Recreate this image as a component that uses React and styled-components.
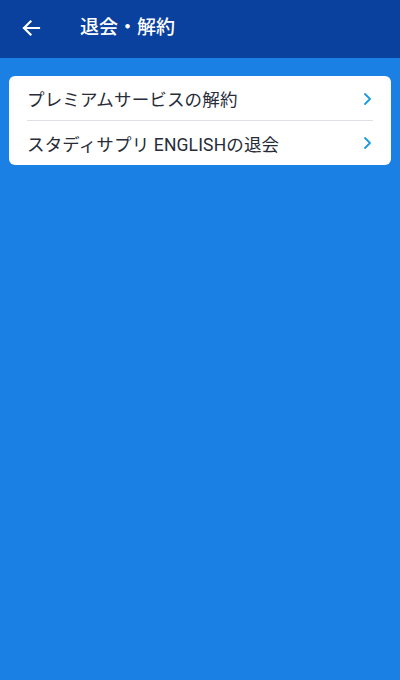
import React from "react";
import styled, { createGlobalStyle } from "styled-components";

const Global = createGlobalStyle`
  html, body { margin: 0; padding: 0; }
  body {
    background: #1a80e3;
    font-family: Roboto, "Noto Sans CJK JP", sans-serif;
  }
`;

const Page = styled.div`
  width: 400px;
  height: 680px;
  background: #1a80e3;
  display: flex;
  flex-direction: column;
`;

const Header = styled.header`
  height: 58px;
  box-sizing: border-box;
  background: #0a409e;
  display: flex;
  align-items: center;
  padding: 0 0 3px 21px;
  gap: 39px;
  color: #fff;
  flex-shrink: 0;
`;

const BackButton = styled.button`
  background: none;
  border: none;
  padding: 0;
  width: 20px;
  height: 20px;
  display: flex;
  align-items: center;
  justify-content: center;
  color: #fff;
`;

const Title = styled.h1`
  margin: 0;
  font-size: 19px;
  line-height: 1;
  font-weight: 500;
  font-family: Roboto, "Noto Sans CJK JP", sans-serif;
`;

const Content = styled.main`
  padding: 18px 9px;
`;

const Card = styled.ul`
  list-style: none;
  margin: 0;
  background: #fff;
  border-radius: 6px;
  padding: 0 18px 0 18px;
`;

const Row = styled.li`
  height: ${(p) => (p.$first ? "44px" : "45px")};
  display: flex;
  align-items: center;
  justify-content: space-between;
  border-top: ${(p) => (p.$first ? "none" : "1px solid #dde1e6")};
  box-sizing: border-box;
  font-size: 17.5px;
  letter-spacing: 0.15px;
  color: #272c38;
  padding-top: ${(p) => (p.$first ? "1px" : "0")};
`;

const Chevron = () => (
  <svg width="12" height="14" viewBox="0 0 12 14" fill="none">
    <path d="M4 2 L9 7 L4 12" stroke="#1a9ae2" strokeWidth="1.8" strokeLinecap="round" strokeLinejoin="round" />
  </svg>
);

const items = ["プレミアムサービスの解約", "スタディサプリ ENGLISHの退会"];

export default function App() {
  return (
    <Page>
      <Global />
      <Header>
        <BackButton aria-label="戻る">
          <svg width="20" height="20" viewBox="0 0 20 20" fill="none">
            <path d="M18 10 H3 M9.5 3.5 L3 10 L9.5 16.5" stroke="#fff" strokeWidth="2.2" strokeLinecap="square" />
          </svg>
        </BackButton>
        <Title>退会・解約</Title>
      </Header>
      <Content>
        <Card>
          {items.map((t, i) => (
            <Row key={t} $first={i === 0}>
              <span>{t}</span>
              <Chevron />
            </Row>
          ))}
        </Card>
      </Content>
    </Page>
  );
}
